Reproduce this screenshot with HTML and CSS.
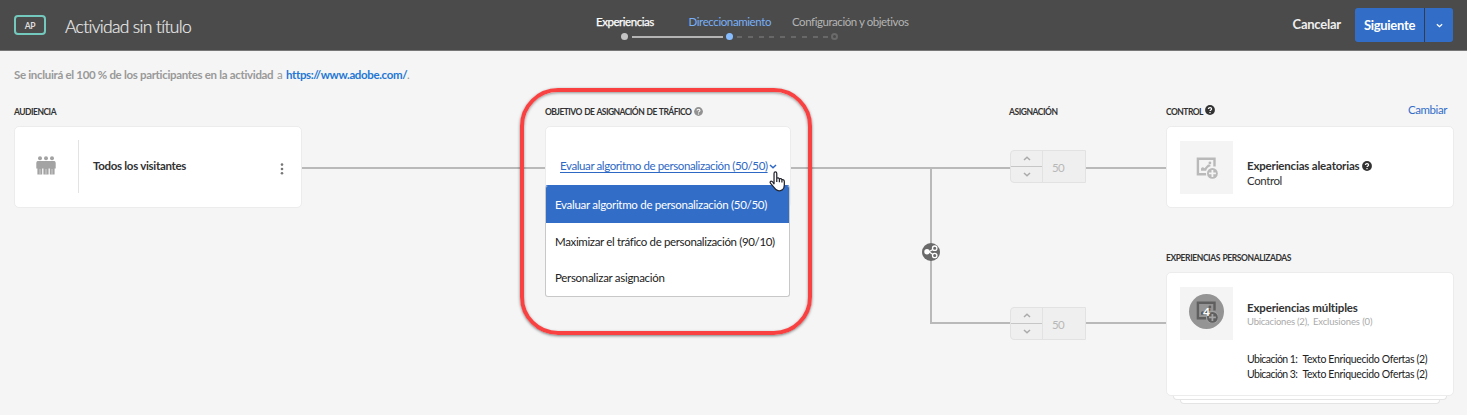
FILE: index.html
```html
<!DOCTYPE html>
<html lang="es">
<head>
<meta charset="utf-8">
<title>Actividad sin título</title>
<link rel="stylesheet" href="styles.css">
</head>
<body>
<svg class="defs" width="0" height="0" aria-hidden="true">
  <symbol id="help" viewBox="0 0 10 10">
    <circle cx="5" cy="5" r="4.9" fill="currentColor"/>
    <path d="M3.4 3.9C3.4 2.1 6.6 2.1 6.6 3.9C6.6 4.9 5 4.9 5 6.1M5 7.1V8.2" fill="none" stroke="#fff" stroke-width="1.2"/>
  </symbol>
  <symbol id="image-add" viewBox="0 0 22 22">
    <path d="M10.500 17.200H1.900V1.800H18.500V9.500" fill="none" stroke="currentColor" stroke-width="2.400"/>
    <path d="M5 13.800V11.500C6 9.700 7.300 10 8.500 11.200L12 7.500H13.200L15 9C12.500 9.500 10.500 11.500 10.200 13.800Z" fill="currentColor"/>
    <circle cx="13.900" cy="6" r="1.400" fill="currentColor"/>
    <circle cx="16.400" cy="16.400" r="6.300"/>
    <circle cx="16.400" cy="16.400" r="5.400" fill="currentColor"/>
    <path d="M15.500 12.900H17.300V15.500H19.900V17.300H17.300V19.900H15.500V17.300H12.900V15.500H15.500Z"/>
  </symbol>
  <symbol id="up" viewBox="0 0 8 5"><path d="M1 4L4 1.200L7 4" fill="none" stroke="currentColor" stroke-width="1.500"/></symbol>
  <symbol id="down" viewBox="0 0 8 5"><path d="M1 1L4 3.800L7 1" fill="none" stroke="currentColor" stroke-width="1.500"/></symbol>
</svg>

<header class="topbar">
  <span class="badge">AP</span>
  <h1 class="title">Actividad sin título</h1>
  <nav class="steps">
    <div class="step-labels">
      <span class="step done">Experiencias</span>
      <span class="step current">Direccionamiento</span>
      <span class="step next">Configuración y objetivos</span>
    </div>
    <div class="track">
      <i class="dot dot-done"></i><i class="bar"></i><i class="dot dot-current"></i><i class="dashes"></i><i class="dot dot-next"></i>
    </div>
  </nav>
  <div class="actions">
    <span class="cancel">Cancelar</span>
    <div class="split">
      <span class="primary">Siguiente</span>
      <span class="more"><svg width="7" height="5"><use href="#down"/></svg></span>
    </div>
  </div>
</header>

<main>
  <p class="intro"><b class="intro-main">Se incluirá el 100 % de los participantes en la actividad</b><span class="intro-a">a</span><b class="url">https://www.adobe.com/</b><span>.</span></p>

  <section class="flow">
    <div class="audience">
      <h2 class="label l-audience">AUDIENCIA</h2>
      <div class="card audience-card">
        <svg class="people" width="20" height="19" viewBox="0 0 20 19" fill="#a3a3a3">
          <circle cx="4" cy="2.200" r="2"/><circle cx="10" cy="2.200" r="2"/><circle cx="16" cy="2.200" r="2"/>
          <path d="M1.500 5H18.500Q19.700 5.300 19.700 7V12.500H18.600V18.500H13.800V12.500H12.600V18.500H7.400V12.500H6.200V18.500H1.400V12.500H.3V7Q.3 5.300 1.500 5Z"/>
          <path d="M4 13V18.500M10 13V18.500M16 13V18.500" stroke="#fff" stroke-width=".5"/>
        </svg>
        <b class="audience-name">Todos los visitantes</b>
        <svg class="kebab" width="4" height="12" fill="#777"><circle cx="2" cy="1.600" r="1.300"/><circle cx="2" cy="6" r="1.300"/><circle cx="2" cy="10.300" r="1.300"/></svg>
      </div>
    </div>

    <div class="line"></div>

    <div class="goal">
      <h2 class="label l-goal"><span>OBJETIVO DE ASIGNACIÓN DE TRÁFICO</span><svg class="help grey" width="9" height="9"><use href="#help"/></svg></h2>
      <div class="card goal-card">
        <span class="goal-link">Evaluar algoritmo de personalización (50/50)</span><svg class="goal-arrow" width="8" height="5"><use href="#down"/></svg>
        <ul class="menu">
          <li class="item i1">Evaluar algoritmo de personalización (50/50)</li>
          <li class="item i2">Maximizar el tráfico de personalización (90/10)</li>
          <li class="item i3">Personalizar asignación</li>
        </ul>
        <svg class="cursor" width="17" height="21" viewBox="0 0 16 20"><path d="M4.700 12.200V2.300Q4.700.8 6 .8Q7.300.8 7.300 2.300V7Q8.800 5.800 9.800 7.600Q11.400 6.700 12.200 8.400Q14.500 7.800 14.500 10.200V13.500Q14.500 16.500 12.500 18Q9 20 6.500 17.700L1.600 12Q.3 10.500 1.600 9.800Q2.800 9.200 4.700 12.200ZM7.300 7V10.500M9.800 7.600V10.700M12.200 8.400V11" fill="#fff" stroke="#24242e" stroke-width="1.200" stroke-linejoin="round"/></svg>
      </div>
      <div class="highlight"></div>
    </div>

    <div class="branch">
      <div class="branch-top"></div>
      <div class="branch-down">
        <svg class="node" width="18" height="18" viewBox="0 0 18 18"><circle cx="9" cy="9" r="9" fill="#6a6a6a"/><path d="M7 8.800L12 5.700M7 8.800L12 12.200" stroke="#fff" stroke-width="1.300"/><circle cx="5" cy="8.800" r="2.700" fill="#fff"/><circle cx="12.700" cy="5.200" r="2.200" fill="#6a6a6a" stroke="#fff" stroke-width="1.300"/><circle cx="12.700" cy="12.500" r="2.200" fill="#6a6a6a" stroke="#fff" stroke-width="1.300"/></svg>
      </div>
    </div>

    <div class="split-col">
      <h2 class="label l-split">ASIGNACIÓN</h2>
      <div class="stepper">
        <span class="arrows"><span class="arrow"><svg width="8" height="5"><use href="#up"/></svg></span><span class="arrow"><svg width="8" height="5"><use href="#down"/></svg></span></span>
        <span class="amount">50</span>
      </div>
      <div class="stepper">
        <span class="arrows"><span class="arrow"><svg width="8" height="5"><use href="#up"/></svg></span><span class="arrow"><svg width="8" height="5"><use href="#down"/></svg></span></span>
        <span class="amount">50</span>
      </div>
    </div>

    <div class="joins"><div class="line"></div><div class="line second"></div></div>

    <div class="experiences">
      <h2 class="label l-control"><span>CONTROL</span><svg class="help dark" width="10" height="10"><use href="#help"/></svg><a class="change">Cambiar</a></h2>
      <div class="card exp-card">
        <div class="thumb"><svg class="image-icon" width="22" height="22"><use href="#image-add"/></svg></div>
        <div class="exp-text">
          <div class="exp-row"><b class="exp-name">Experiencias aleatorias</b><svg class="help" width="10" height="10"><use href="#help"/></svg></div>
          <div class="exp-kind">Control</div>
        </div>
      </div>
      <h2 class="label l-custom">EXPERIENCIAS PERSONALIZADAS</h2>
      <div class="card exp-card multi">
        <div class="thumb"><span class="disc"><svg class="image-icon dim" width="22" height="22"><use href="#image-add"/></svg></span><span class="count">4</span></div>
        <div class="exp-text">
          <b class="multi-name">Experiencias múltiples</b>
          <div class="meta"><span class="loc">Ubicaciones (2),</span><span class="exc">Exclusiones (0)</span></div>
          <div class="place"><span class="place-key">Ubicación 1:</span><span>Texto Enriquecido Ofertas (2)</span></div>
          <div class="place"><span class="place-key">Ubicación 3:</span><span>Texto Enriquecido Ofertas (2)</span></div>
        </div>
      </div>
      <div class="sheet"></div>
      <div class="sheet last"></div>
    </div>
  </section>
</main>
</body>
</html>
```
FILE: styles.css
```css
* { box-sizing: border-box; }
body { margin: 0; height: 415px; overflow: hidden; background: #f5f5f5; color: #323232; font: 11.5px/15px Lato, sans-serif; white-space: nowrap; }
svg { display: block; flex: none; }
.defs { position: absolute; }
h1, h2, p, ul { margin: 0; padding: 0; }

.topbar { display: flex; height: 51px; background: #4b4b4b; border-bottom: 1px solid #777; }
.badge { width: 32px; height: 20px; margin: 15px 0 0 14px; border: 2px solid #73c9bd; border-radius: 4px; color: #ddd; font-size: 8.5px; font-weight: 700; line-height: 18px; letter-spacing: -.3px; text-align: center; }
.title { width: 530px; margin: 16px 0 0 19px; color: #eaeaea; font-size: 17.5px; font-weight: 300; line-height: 22px; letter-spacing: -.67px; -webkit-text-stroke: .2px; }
.steps { width: 314px; margin: 14px 0 0 1px; }
.step-labels { display: flex; }
.step.done { width: 92px; color: #fff; letter-spacing: -.46px; -webkit-text-stroke: .25px; }
.step.current { width: 104px; color: #78b0f8; letter-spacing: -.4px; padding-left: .5px; }
.step.next { color: #b4b4b4; letter-spacing: -.45px; }
.track { display: flex; align-items: center; gap: 3.5px; margin: 4px 0 0 25px; }
.dot { width: 7px; height: 7px; border-radius: 50%; flex: none; }
.dot-done { background: #c4c4c4; }
.dot-current { background: #87bdff; }
.dot-next { border: 2px solid #6a6a6a; }
.bar { width: 91px; height: 2px; background: #b4b4b4; }
.dashes { width: 91px; height: 2px; background: repeating-linear-gradient(90deg, #686868 0 5px, transparent 5px 10.800px); }
.actions { display: flex; margin-left: auto; padding-right: 14px; gap: 14px; }
.cancel { margin-top: 17px; color: #eee; font-size: 13px; font-weight: 700; letter-spacing: -.23px; }
.split { display: flex; height: 34px; margin-top: 8px; border-radius: 3px; background: #326ec8; color: #fff; }
.primary { width: 70px; border-right: 1px solid #303c50; padding-left: 9px; font-size: 13px; font-weight: 700; line-height: 35px; letter-spacing: -.31px; }
.more { display: flex; width: 28px; align-items: center; justify-content: center; }

.intro { display: flex; height: 49px; padding: 16px 14px 0; color: #999; }
.intro-main { width: 263px; letter-spacing: -.32px; }
.intro-a { width: 9px; }
.url { width: 121px; color: #2478d4; letter-spacing: -.36px; }

.flow { display: grid; grid-template-columns: 288px 243px 246px 219px 76px 80px 288px; margin-left: 14px; align-items: start; }
.label { display: flex; height: 26px; align-items: center; padding-bottom: 3px; font-size: 8.5px; font-weight: 700; line-height: 12px; word-spacing: .8px; }
.l-audience { letter-spacing: -.5px; }
.l-goal { letter-spacing: -.54px; }
.l-split { letter-spacing: -.46px; margin-left: -1px; }
.l-control { letter-spacing: -.53px; }
.l-custom { height: 64px; padding: 44px 0 0; align-items: flex-start; letter-spacing: -.41px; }
.help { margin-left: 3px; color: #323232; }
.help.grey { color: #929292; }
.help.dark { margin: -3px 0 0 2px; }
.card { border: 1px solid #ececec; border-radius: 5px; background: #fff; }
.line { height: 2px; margin-top: 67px; background: #b9b9b9; }
.joins .second { margin-top: 153px; }

.audience-card { display: flex; height: 82px; }
.people { margin: 29px 0 0 21px; }
.audience-name { width: 188px; height: 53px; margin: 13px 0 0 22px; padding: 18px 0 0 14px; border-left: 1px solid #e3e3e3; letter-spacing: -.3px; }
.kebab { margin: 36px 0 0 14px; }

.goal { position: relative; }
.goal-card { position: relative; display: flex; height: 82px; padding: 31px 0 0 14px; color: #2d68c4; }
.goal-link { height: 15px; letter-spacing: -.39px; text-decoration: underline; text-underline-offset: 1.500px; text-decoration-skip-ink: none; text-decoration-thickness: 1px; }
.goal-arrow { margin: 6px 0 0 1px; }
.menu { position: absolute; z-index: 1; left: -1px; top: 58px; width: 245px; border: 1px solid #c8c8c8; border-top-color: #326ec8; border-radius: 3px; background: #fff; list-style: none; overflow: hidden; }
.item { height: 36.700px; padding: 0 9px; color: #222; line-height: 38px; }
.i1 { background: #326ec8; color: #fff; letter-spacing: -.29px; }
.i2 { letter-spacing: -.35px; }
.i3 { letter-spacing: -.3px; }
.cursor { position: absolute; z-index: 2; left: 223px; top: 44px; }
.highlight { position: absolute; z-index: 3; left: -25px; top: -12px; width: 292px; height: 247px; border: 4.500px solid #f94141; border-radius: 38px; box-shadow: 0 1px 3px rgba(0, 0, 0, .5), inset 0 1px 3px rgba(0, 0, 0, .4); }

.branch-top { height: 2px; margin-top: 67px; background: #b9b9b9; }
.branch-down { position: relative; height: 155px; margin-left: 139px; border-left: 2px solid #b9b9b9; border-bottom: 2px solid #b9b9b9; }
.node { position: absolute; left: -10px; top: 74px; }

.stepper { display: flex; height: 33px; margin-top: 24px; border: 1px solid #e2e2e2; border-radius: 4px 0 0 4px; background: #efefef; color: #b8b8b8; }
.stepper + .stepper { margin-top: 124px; }
.arrows { display: flex; flex-direction: column; width: 32px; border-right: 1px solid #e2e2e2; }
.arrow { display: flex; flex: 1; align-items: center; justify-content: center; color: #aaa; }
.arrow + .arrow { border-top: 1px solid #c6c6c6; }
.amount { padding: 9px 0 0 9px; letter-spacing: -.660px; }

.change { margin: -4px 7px 0 auto; color: #326ec8; font-size: 11.500px; font-weight: 400; letter-spacing: -.43px; }
.exp-card { display: flex; height: 82px; padding: 14px 0 0 13px; }
.thumb { position: relative; display: flex; width: 53px; height: 53px; flex: none; align-items: center; justify-content: center; background: #f4f4f4; }
.image-icon { color: #b9b9b9; fill: #f4f4f4; }
.image-icon.dim { color: #5f5f5f; fill: #a4a4a4; }
.exp-text { margin-left: 14px; }
.exp-row { display: flex; align-items: center; margin-top: 17px; }
.exp-name { letter-spacing: -.19px; }
.exp-kind { letter-spacing: -.4px; }
.multi { height: 124px; }
.disc { display: flex; width: 35px; height: 35px; margin-bottom: 4px; border-radius: 50%; align-items: center; justify-content: center; background: #949494; }
.count { position: absolute; left: 9px; top: 7px; width: 35px; color: #fff; font-size: 12px; font-weight: 700; line-height: 35px; text-align: center; }
.multi-name { display: block; margin-top: 13px; letter-spacing: -.15px; }
.meta { display: flex; gap: 4px; height: 37px; color: #aaa; font-size: 9.500px; line-height: 14px; }
.loc { letter-spacing: -.23px; }
.exc { letter-spacing: -.12px; }
.place { display: flex; gap: 5px; color: #222; font-size: 10.500px; letter-spacing: -.34px; line-height: 14.700px; }
.place-key { letter-spacing: -.55px; }
.sheet { height: 4px; margin: 0 7px; border: 1px solid #e4e4e4; border-top: 0; border-radius: 0 0 4px 4px; background: #fff; }
.sheet.last { margin: 0 14px; }
```
